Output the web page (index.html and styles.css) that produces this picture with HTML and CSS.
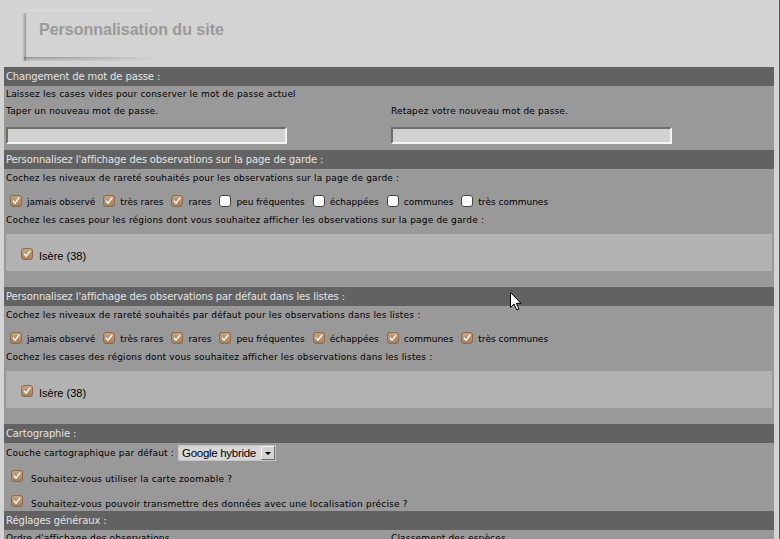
FILE: index.html
```html
<!DOCTYPE html>
<html lang="fr">
<head>
<meta charset="utf-8">
<title>Personnalisation du site</title>
<link rel="stylesheet" href="styles.css">
</head>
<body>
<div class="window">
  <header class="top">
    <div class="title-box"><h1 class="title">Personnalisation du site</h1></div>
  </header>
  <main class="panel">
    <section class="sec">
      <h2 class="sec-head">Changement de mot de passe :</h2>
      <div class="sec-body">
        <p class="line">Laissez les cases vides pour conserver le mot de passe actuel</p>
        <div class="cols">
          <div class="col">
            <p class="line">Taper un nouveau mot de passe.</p>
            <span class="field"></span>
          </div>
          <div class="col">
            <p class="line">Retapez votre nouveau mot de passe.</p>
            <span class="field"></span>
          </div>
        </div>
      </div>
    </section>

    <section class="sec">
      <h2 class="sec-head">Personnalisez l'affichage des observations sur la page de garde :</h2>
      <div class="sec-body gap">
        <p class="line">Cochez les niveaux de rareté souhaités pour les observations sur la page de garde :</p>
        <div class="checks">
          <span class="opt"><span class="cb on"><svg viewBox="0 0 12 12"><path d="M2.8 6.2 L5 8.6 L9.4 2.6"/></svg></span>jamais observé</span>
          <span class="opt"><span class="cb on"><svg viewBox="0 0 12 12"><path d="M2.8 6.2 L5 8.6 L9.4 2.6"/></svg></span>très rares</span>
          <span class="opt"><span class="cb on"><svg viewBox="0 0 12 12"><path d="M2.8 6.2 L5 8.6 L9.4 2.6"/></svg></span>rares</span>
          <span class="opt"><span class="cb"></span>peu fréquentes</span>
          <span class="opt"><span class="cb"></span>échappées</span>
          <span class="opt"><span class="cb"></span>communes</span>
          <span class="opt"><span class="cb"></span>très communes</span>
        </div>
        <p class="line">Cochez les cases pour les régions dont vous souhaitez afficher les observations sur la page de garde :</p>
        <div class="region-box">
          <span class="cb on"><svg viewBox="0 0 12 12"><path d="M2.8 6.2 L5 8.6 L9.4 2.6"/></svg></span>
          <span class="region">Isère (38)</span>
        </div>
      </div>
    </section>

    <section class="sec">
      <h2 class="sec-head">Personnalisez l'affichage des observations par défaut dans les listes :</h2>
      <div class="sec-body gap">
        <p class="line">Cochez les niveaux de rareté souhaités par défaut pour les observations dans les listes :</p>
        <div class="checks">
          <span class="opt"><span class="cb on"><svg viewBox="0 0 12 12"><path d="M2.8 6.2 L5 8.6 L9.4 2.6"/></svg></span>jamais observé</span>
          <span class="opt"><span class="cb on"><svg viewBox="0 0 12 12"><path d="M2.8 6.2 L5 8.6 L9.4 2.6"/></svg></span>très rares</span>
          <span class="opt"><span class="cb on"><svg viewBox="0 0 12 12"><path d="M2.8 6.2 L5 8.6 L9.4 2.6"/></svg></span>rares</span>
          <span class="opt"><span class="cb on"><svg viewBox="0 0 12 12"><path d="M2.8 6.2 L5 8.6 L9.4 2.6"/></svg></span>peu fréquentes</span>
          <span class="opt"><span class="cb on"><svg viewBox="0 0 12 12"><path d="M2.8 6.2 L5 8.6 L9.4 2.6"/></svg></span>échappées</span>
          <span class="opt"><span class="cb on"><svg viewBox="0 0 12 12"><path d="M2.8 6.2 L5 8.6 L9.4 2.6"/></svg></span>communes</span>
          <span class="opt"><span class="cb on"><svg viewBox="0 0 12 12"><path d="M2.8 6.2 L5 8.6 L9.4 2.6"/></svg></span>très communes</span>
        </div>
        <p class="line">Cochez les cases des régions dont vous souhaitez afficher les observations dans les listes :</p>
        <div class="region-box">
          <span class="cb on"><svg viewBox="0 0 12 12"><path d="M2.8 6.2 L5 8.6 L9.4 2.6"/></svg></span>
          <span class="region">Isère (38)</span>
        </div>
      </div>
    </section>

    <section class="sec">
      <h2 class="sec-head">Cartographie :</h2>
      <div class="sec-body">
        <div class="map-row">
          <span class="map-label">Couche cartographique par défaut :</span>
          <span class="select"><span class="select-val">Google hybride</span><span class="select-btn"><svg viewBox="0 0 8 5"><path d="M1 1 H7 L4 4 Z"/></svg></span></span>
        </div>
        <div class="ask-row first">
          <span class="cb on"><svg viewBox="0 0 12 12"><path d="M2.8 6.2 L5 8.6 L9.4 2.6"/></svg></span>
          <span class="ask">Souhaitez-vous utiliser la carte zoomable ?</span>
        </div>
        <div class="ask-row second">
          <span class="cb on"><svg viewBox="0 0 12 12"><path d="M2.8 6.2 L5 8.6 L9.4 2.6"/></svg></span>
          <span class="ask">Souhaitez-vous pouvoir transmettre des données avec une localisation précise ?</span>
        </div>
      </div>
    </section>

    <section class="sec">
      <h2 class="sec-head">Réglages généraux :</h2>
      <div class="sec-body">
        <div class="cols">
          <p class="line">Ordre d'affichage des observations</p>
          <p class="line">Classement des espèces</p>
        </div>
      </div>
    </section>
  </main>
  <svg class="cursor" viewBox="0 0 12 19" width="12" height="19"><path d="M0.5 0.5 V15.5 L4 12 L6.8 18 L9 17 L6.3 11.3 H11 Z"/></svg>
</div>
</body>
</html>
```

FILE: styles.css
```css
html, body {
  margin: 0;
  padding: 0;
}
body {
  width: 780px;
  height: 539px;
  overflow: hidden;
  background: #d3d3d3;
  font-family: "DejaVu Sans", sans-serif;
}
.window {
  position: relative;
  width: 779px;
  height: 539px;
  border-right: 1px solid #505050;
  overflow: hidden;
}
.top {
  height: 67px;
  padding-top: 10px;
  box-sizing: border-box;
}
.title-box {
  position: relative;
  margin-left: 26px;
  width: 128px;
  height: 47px;
  box-sizing: border-box;
  border-top: 1px solid #dadada;
  background: #d3d3d3;
}
.title-box::before {
  content: "";
  position: absolute;
  left: -4px;
  top: 2px;
  width: 4px;
  height: 48px;
  background: linear-gradient(to left, rgba(0, 0, 0, 0.28), rgba(0, 0, 0, 0));
}
.title-box::after {
  content: "";
  position: absolute;
  left: -2px;
  bottom: -4px;
  width: 132px;
  height: 4px;
  background: linear-gradient(to right, rgba(0, 0, 0, 0.3), rgba(0, 0, 0, 0.12) 70%, rgba(0, 0, 0, 0));
  -webkit-mask-image: linear-gradient(to bottom, #000, rgba(0, 0, 0, 0.2));
  mask-image: linear-gradient(to bottom, #000, rgba(0, 0, 0, 0.2));
}
.title {
  margin: 0;
  padding-left: 13px;
  white-space: nowrap;
  font-family: "Liberation Sans", Arial, sans-serif;
  font-weight: bold;
  font-size: 16px;
  line-height: 38px;
  color: #9a9a9a;
}
.panel {
  margin-left: 4px;
  width: 770px;
  background: #999999;
}
.sec-head {
  margin: 0;
  height: 19px;
  padding-left: 2px;
  background: #626262;
  color: #e4e4e4;
  font-weight: normal;
  font-size: 10px;
  letter-spacing: -0.12px;
  line-height: 19px;
  white-space: nowrap;
}
.sec-body {
  padding: 0 2px;
  font-size: 9px;
  color: #000;
}
.sec-body.gap {
  padding-top: 1px;
  padding-bottom: 16px;
}
.line {
  margin: 0;
  height: 17px;
  line-height: 17px;
  white-space: nowrap;
  letter-spacing: 0.17px;
}
.cols {
  display: grid;
  grid-template-columns: 385px 1fr;
}
.field {
  display: block;
  margin-top: 7px;
  margin-bottom: 6px;
  width: 281px;
  height: 17px;
  box-sizing: border-box;
  background: #d1d1d1;
  border-style: solid;
  border-width: 2px;
  border-color: #6e6e6a #f4f4f4 #f4f4f4 #6e6e6a;
}
.checks {
  display: flex;
  align-items: center;
  height: 25px;
  padding-top: 5px;
  box-sizing: border-box;
  white-space: nowrap;
}
.opt {
  display: inline-flex;
  align-items: center;
  margin-right: 4px;
}
.opt .cb {
  margin: 0 5px 2px 4px;
}
.cb {
  display: inline-block;
  flex: none;
  width: 12px;
  height: 12px;
  box-sizing: border-box;
  border-radius: 3px;
  background: #ffffff;
  border: 1px solid #444;
}
.cb.on {
  border: 1px solid #8c6a4e;
  background: linear-gradient(#c9a27f, #a97e5b);
}
.cb svg {
  display: block;
  width: 10px;
  height: 10px;
}
.cb svg path {
  fill: none;
  stroke: #ffffff;
  stroke-width: 1.8;
  stroke-linecap: round;
  stroke-linejoin: round;
}
.region-box {
  display: flex;
  align-items: flex-start;
  margin-top: 5px;
  height: 37px;
  box-sizing: border-box;
  padding: 14px 0 0 15px;
  background: #b2b2b2;
}
.region {
  margin-left: 6px;
  margin-top: 1px;
  font-family: "Liberation Sans", Arial, sans-serif;
  font-size: 11px;
  line-height: 14px;
}
.map-row {
  display: flex;
  align-items: center;
  height: 20px;
  white-space: nowrap;
}
.map-label {
  letter-spacing: 0.2px;
}
.select {
  display: inline-flex;
  align-items: center;
  margin-left: 4px;
  width: 98px;
  height: 16px;
  box-sizing: border-box;
  background: #d7d7d7;
  border: 1px solid #c4c4c4;
}
.select-val {
  flex: 1;
  min-width: 0;
  overflow: hidden;
  padding-left: 3px;
  font-family: "Liberation Sans", Arial, sans-serif;
  font-size: 11.5px;
  letter-spacing: -0.3px;
  line-height: 14px;
}
.select-btn {
  display: flex;
  flex: none;
  align-items: center;
  justify-content: center;
  width: 14px;
  height: 14px;
  box-sizing: border-box;
  background: #d3d3d3;
  border-style: solid;
  border-width: 1px;
  border-color: #f2f2f2 #6a6a6a #6a6a6a #f2f2f2;
}
.select-btn svg {
  width: 8px;
  height: 5px;
}
.select-btn path {
  fill: #000;
}
.ask-row {
  display: flex;
  align-items: flex-start;
  padding-left: 5px;
  white-space: nowrap;
}
.ask-row.first {
  height: 25px;
  padding-top: 7px;
  box-sizing: border-box;
}
.ask-row.second {
  height: 23px;
  padding-top: 7px;
  box-sizing: border-box;
}
.ask {
  margin-left: 8px;
  margin-top: 2px;
  line-height: 14px;
  letter-spacing: 0.18px;
}
.cursor {
  position: absolute;
  left: 510px;
  top: 292px;
}
.cursor path {
  fill: #ffffff;
  stroke: #000000;
  stroke-width: 1;
  stroke-linejoin: miter;
}
```
